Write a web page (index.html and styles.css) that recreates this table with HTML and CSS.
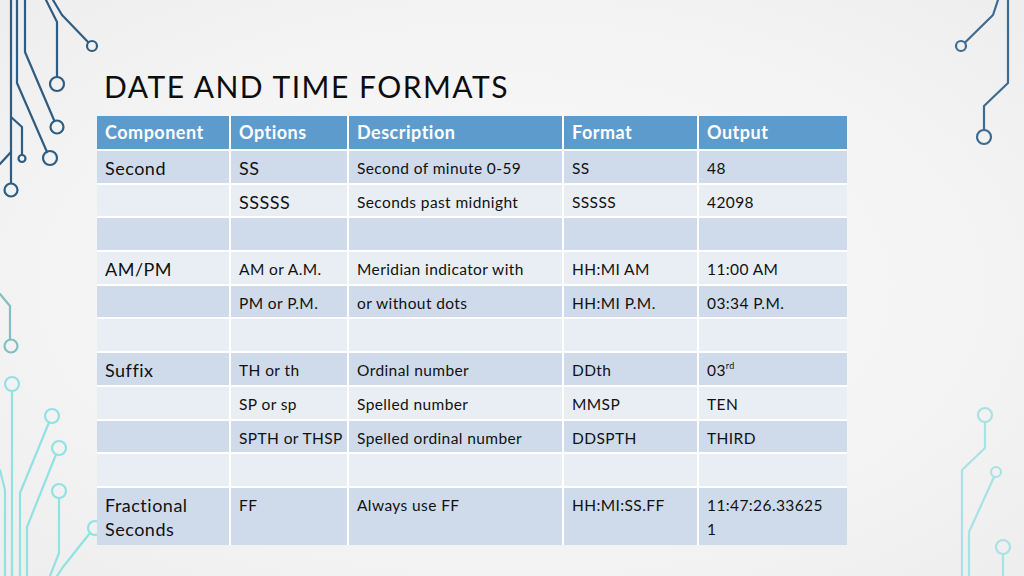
FILE: index.html
```html
<!DOCTYPE html>
<html lang="en">
<head>
<meta charset="utf-8">
<title>Date and Time Formats</title>
<link rel="stylesheet" href="styles.css">
</head>
<body>
<div class="slide">
  <svg class="circuit" width="1024" height="576" viewBox="0 0 1024 576" fill="none" stroke-width="2.2" stroke-linecap="round" stroke-linejoin="round">
    <g stroke="#2f5d82">
      <path d="M11 0 V183"/>
      <circle cx="11" cy="190" r="6.5"/>
      <path d="M17 0 V83 L47 152"/>
      <circle cx="50" cy="158" r="7"/>
      <path d="M25 0 V52 L54 120"/>
      <circle cx="57" cy="127" r="6.5"/>
      <path d="M46 0 L57 22 V77"/>
      <circle cx="57" cy="84" r="7"/>
      <path d="M53 0 L62 15 L88 42"/>
      <circle cx="92" cy="46" r="5"/>
      <path d="M11 117 L22 127 V155"/>
      <circle cx="22" cy="158.5" r="3.5"/>
      <path d="M11 152 L0 164"/>
    </g>
    <g stroke="#80c0c2">
      <path d="M0 294 L10 306 V339"/>
      <circle cx="11" cy="346" r="6.5"/>
    </g>
    <g stroke="#92e2e3">
      <circle cx="12" cy="384" r="7"/>
      <path d="M12 391 V576"/>
      <circle cx="52" cy="416" r="7"/>
      <path d="M49 422.5 L20 493 V576"/>
      <circle cx="59" cy="448" r="7"/>
      <path d="M56 454.5 L27 527 V576"/>
      <circle cx="59" cy="491" r="7"/>
      <path d="M59 498 V553 L50 576"/>
      <circle cx="95" cy="528" r="7"/>
      <path d="M90 533 L63 567 L57 576"/>
      <path d="M0 470 L5 490 V576"/>
    </g>
    <g stroke="#3d6b91">
      <path d="M998 0 L993 15 L965 42.5"/>
      <circle cx="961" cy="46" r="5"/>
      <path d="M1008 0 V83 L984 106 V130"/>
      <circle cx="984" cy="137" r="7"/>
    </g>
    <g stroke="#a9e2e4">
      <circle cx="985" cy="415" r="7"/>
      <path d="M985 422 V448 L962 470 V576"/>
      <circle cx="996" cy="472" r="5"/>
      <path d="M994 477 L969 532 V576"/>
      <circle cx="1003" cy="547" r="7"/>
      <path d="M1003 554 V576"/>
    </g>
  </svg>
  <div class="content">
    <h1 class="title">DATE AND TIME FORMATS</h1>
    <table class="grid">
      <colgroup>
        <col class="c1"><col class="c2"><col class="c3"><col class="c4"><col class="c5">
      </colgroup>
      <thead>
        <tr><th>Component</th><th>Options</th><th>Description</th><th>Format</th><th>Output</th></tr>
      </thead>
      <tbody>
        <tr class="odd"><td class="big">Second</td><td class="big">SS</td><td>Second of minute 0-59</td><td>SS</td><td>48</td></tr>
        <tr class="even"><td class="big"></td><td class="big">SSSSS</td><td>Seconds past midnight</td><td>SSSSS</td><td>42098</td></tr>
        <tr class="odd"><td></td><td></td><td></td><td></td><td></td></tr>
        <tr class="even"><td class="big">AM/PM</td><td>AM or A.M.</td><td>Meridian indicator with</td><td>HH:MI AM</td><td>11:00 AM</td></tr>
        <tr class="odd"><td></td><td>PM or P.M.</td><td>or without dots</td><td>HH:MI P.M.</td><td>03:34 P.M.</td></tr>
        <tr class="even"><td></td><td></td><td></td><td></td><td></td></tr>
        <tr class="odd"><td class="big">Suffix</td><td>TH or th</td><td>Ordinal number</td><td>DDth</td><td>03<sup>rd</sup></td></tr>
        <tr class="even"><td></td><td>SP or sp</td><td>Spelled number</td><td>MMSP</td><td>TEN</td></tr>
        <tr class="odd"><td></td><td>SPTH or THSP</td><td>Spelled ordinal number</td><td>DDSPTH</td><td>THIRD</td></tr>
        <tr class="even"><td></td><td></td><td></td><td></td><td></td></tr>
        <tr class="odd tall"><td class="big">Fractional<br>Seconds</td><td>FF</td><td>Always use FF</td><td>HH:MI:SS.FF</td><td>11:47:26.33625<br>1</td></tr>
      </tbody>
    </table>
  </div>
</div>
</body>
</html>
```

FILE: styles.css
```css
html, body {
  margin: 0;
  padding: 0;
}

body {
  width: 1024px;
  height: 576px;
  overflow: hidden;
  font-family: "Lato", "Open Sans", sans-serif;
  color: #111;
}

.slide {
  position: relative;
  width: 1024px;
  height: 576px;
  overflow: hidden;
  background: radial-gradient(ellipse 70% 70% at 50% 50%, #fbfbfb 0%, #f4f4f4 60%, #eeeeee 100%);
}

.circuit {
  position: absolute;
  left: 0;
  top: 0;
}

.content {
  position: relative;
  padding: 68px 0 0 97px;
}

.title {
  margin: 0 0 12px 7px;
  font-family: "Lato", sans-serif;
  font-weight: 400;
  font-size: 30px;
  line-height: 36px;
  letter-spacing: 1.5px;
  color: #0d0d0d;
}

.grid {
  border-collapse: separate;
  border-spacing: 0;
  table-layout: fixed;
  width: 750px;
}

.c1 { width: 132px; }
.c2 { width: 118px; }
.c3 { width: 215px; }
.c4 { width: 135px; }
.c5 { width: 150px; }

.grid th,
.grid td {
  box-sizing: border-box;
  padding: 5px 8px 0 8px;
  text-align: left;
  vertical-align: top;
  white-space: nowrap;
  line-height: 24px;
}

.grid th + th,
.grid td + td {
  border-left: 2px solid #ffffff;
}

.grid th {
  height: 33px;
  padding-top: 4px;
  background: #5e9bcd;
  color: #ffffff;
  font-weight: 700;
  font-size: 18px;
  letter-spacing: 0.5px;
}

.grid td {
  height: 33.7px;
  border-top: 2px solid #ffffff;
  font-size: 15.5px;
  letter-spacing: 0.4px;
}

.grid td.big {
  font-size: 18px;
  letter-spacing: 0.5px;
}

.grid tr.odd td {
  background: #cfdbea;
}

.grid tr.even td {
  background: #e9eef5;
}

.grid tr.tall td {
  height: 59px;
}

.grid sup {
  font-size: 9px;
  line-height: 0;
  vertical-align: 7px;
}
```
